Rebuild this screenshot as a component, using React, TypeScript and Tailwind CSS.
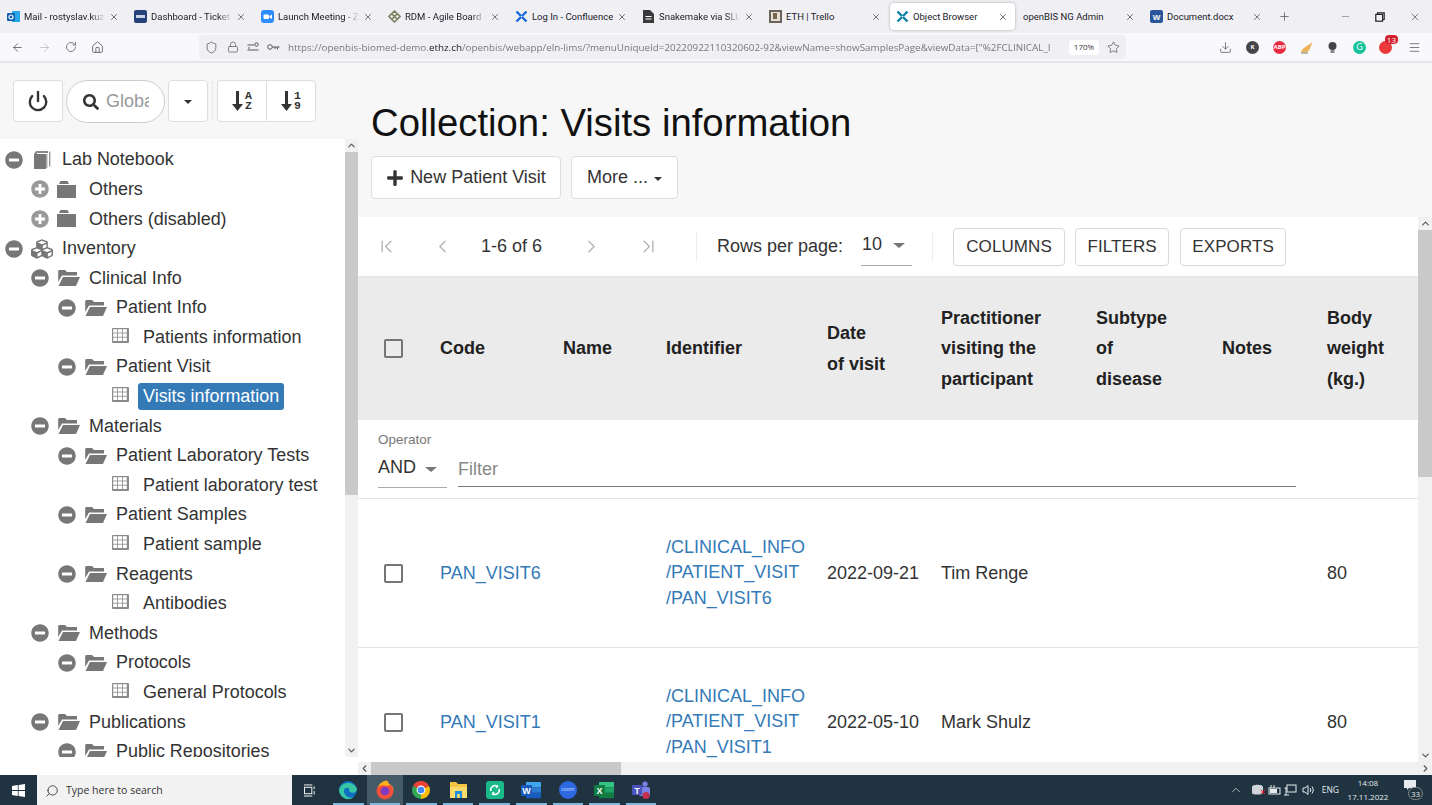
import { ReactNode } from "react";
import { FaCubes, FaMinusCircle, FaPlus, FaPlusCircle, FaSearch } from "react-icons/fa";
import {
  ArrowLeft,
  ArrowRight,
  ChevronDown,
  ChevronFirst,
  ChevronLast,
  ChevronLeft,
  ChevronRight,
  ChevronUp,
  Download,
  Home,
  Lock,
  Menu,
  Minus,
  Plus,
  Power,
  RotateCw,
  Search,
  Shield,
  Star,
  X,
} from "lucide-react";

type Tab = { title: string; icon: ReactNode; active?: boolean; fade?: boolean };

function IconBox({ color, label }: { color: string; label: string }) {
  return (
    <svg width="13" height="13" viewBox="0 0 13 13" className="shrink-0">
      <rect width="13" height="13" rx="2" fill={color} />
      <text x="6.5" y="9.5" fontSize="8" fontWeight="700" textAnchor="middle" fill="#fff" fontFamily="Liberation Sans, sans-serif">
        {label}
      </text>
    </svg>
  );
}

function CrossLogo({ color = "#0f7fa8" }: { color?: string }) {
  return (
    <svg width="13" height="13" viewBox="0 0 13 13" className="shrink-0" fill="none" stroke={color} strokeWidth="2.4">
      <path d="M1.5 1.5 L6 6 M11.5 1.5 L7 6 M1.5 11.5 L6 7 M11.5 11.5 L7 7" />
    </svg>
  );
}

const tabs: Tab[] = [
  {
    title: "Mail - rostyslav.kuzya",
    fade: true,
    icon: (
      <svg width="13" height="13" viewBox="0 0 13 13" className="shrink-0">
        <rect x="5" y="1" width="8" height="11" fill="#28a8ea" />
        <rect x="0" y="3" width="8" height="8" rx="1" fill="#0f5fb0" />
        <circle cx="4" cy="7" r="2" fill="none" stroke="#fff" strokeWidth="1.2" />
      </svg>
    ),
  },
  {
    title: "Dashboard - Ticket-Sys",
    fade: true,
    icon: (
      <svg width="13" height="13" viewBox="0 0 13 13" className="shrink-0">
        <rect width="13" height="13" rx="2" fill="#24417c" />
        <rect x="2" y="5" width="9" height="3" fill="#c9d3e6" />
      </svg>
    ),
  },
  {
    title: "Launch Meeting - Zoom",
    fade: true,
    icon: (
      <svg width="13" height="13" viewBox="0 0 13 13" className="shrink-0">
        <rect width="13" height="13" rx="3" fill="#2d8cff" />
        <rect x="2.5" y="4.5" width="5.5" height="4.5" rx="1" fill="#fff" />
        <path d="M8.5 6 L11 4.5 V9 L8.5 7.5 Z" fill="#fff" />
      </svg>
    ),
  },
  {
    title: "RDM - Agile Board - Ji",
    fade: true,
    icon: (
      <svg width="13" height="13" viewBox="0 0 13 13" className="shrink-0" fill="none" stroke="#7d7f5e" strokeWidth="1.6">
        <path d="M6.5 1 L12 6.5 L6.5 12 L1 6.5 Z M4 4 L9 9 M9 4 L4 9" />
      </svg>
    ),
  },
  { title: "Log In - Confluence", icon: <CrossLogo color="#1868db" /> },
  {
    title: "Snakemake via SLURM",
    fade: true,
    icon: (
      <svg width="11" height="13" viewBox="0 0 11 13" className="shrink-0">
        <path d="M0 0 H7 L11 4 V13 H0 Z" fill="#3a3a3a" />
        <path d="M2.5 6.5 H8.5 M2.5 9 H8.5" stroke="#fff" strokeWidth="1" />
      </svg>
    ),
  },
  {
    title: "ETH | Trello",
    icon: (
      <svg width="13" height="13" viewBox="0 0 13 13" className="shrink-0">
        <rect width="13" height="13" fill="#6b6259" />
        <rect x="2" y="2" width="9" height="9" fill="#e4dfd5" />
        <rect x="4" y="3" width="4" height="6" fill="#75654d" />
      </svg>
    ),
  },
  { title: "Object Browser", icon: <CrossLogo />, active: true },
  { title: "openBIS NG Admin", icon: null },
  { title: "Document.docx", icon: <IconBox color="#2b579a" label="W" /> },
];

function BrowserTab({ tab }: { tab: Tab }) {
  return (
    <div className={`flex h-[27px] shrink-0 items-center rounded ${tab.active ? "mx-px w-[125px] bg-white pl-[6px] pr-[7px] shadow-[0_0_3px_rgba(0,0,0,0.3)]" : "w-[127px] pl-[7px] pr-[8px]"}`}>
      {tab.icon ? <span className="mr-[4px] flex w-[13px] shrink-0 justify-center">{tab.icon}</span> : null}
      <span className={`min-w-0 flex-1 overflow-hidden whitespace-nowrap pt-px font-['Roboto',sans-serif] text-[9.5px] text-[#20202a] ${tab.fade ? "[mask-image:linear-gradient(to_left,transparent,black_14px)]" : ""}`}>{tab.title}</span>
      <X size={10} strokeWidth={1.6} className="ml-1 shrink-0 text-[#33333a]" />
    </div>
  );
}

function ExtIcon({ bg, children, color = "#fff" }: { bg: string; children: ReactNode; color?: string }) {
  return (
    <span className="flex h-[13px] w-[13px] items-center justify-center rounded-full text-[6px] font-bold" style={{ backgroundColor: bg, color }}>
      {children}
    </span>
  );
}

function BrowserChrome() {
  return (
    <header className="shrink-0 font-['Open_Sans',sans-serif]">
      <div className="flex h-[33px] items-center bg-[#f0f0f4] pl-0">
        {tabs.map((tab) => (
          <BrowserTab key={tab.title} tab={tab} />
        ))}
        <Plus size={13} strokeWidth={1.4} className="ml-[8px] text-[#55555c]" />
        <div className="ml-auto flex items-center gap-[24px] pr-[11px] text-[#33333a]">
          <Minus size={11} strokeWidth={1.4} className="text-[#777]" />
          <svg width="10" height="10" viewBox="0 0 10 10" fill="none" stroke="#222" strokeWidth="1.2">
            <rect x="0.8" y="2.4" width="6.8" height="6.8" />
            <path d="M2.5 2.2 V0.8 H9.2 V7.5 H7.8" />
          </svg>
          <X size={12} strokeWidth={1.2} />
        </div>
      </div>
      <div className="flex h-[30px] items-center border-b-[2px] border-[#e6e6e8] bg-[#f9f9fb] text-[#55555c]">
        <div className="flex w-[199px] items-center">
          <ArrowLeft size={13} strokeWidth={1.5} className="ml-[11px]" />
          <ArrowRight size={13} strokeWidth={1.5} className="ml-[14px] text-[#b8b8bc]" />
          <RotateCw size={12} strokeWidth={1.5} className="ml-[14px]" />
          <Home size={13} strokeWidth={1.5} className="ml-[14px]" />
        </div>
        <div className="flex h-[24px] w-[927px] items-center rounded bg-[#f0f0f4]">
          <Shield size={13} strokeWidth={1.4} className="ml-[6px]" />
          <Lock size={12} strokeWidth={1.4} className="ml-[9px]" />
          <svg width="12" height="10" viewBox="0 0 12 10" fill="none" stroke="#55555c" className="ml-[8px]">
            <path d="M0.5 3 H7 M0.5 8 H11.5 M1 6 H3" />
            <circle cx="9.5" cy="2.5" r="1.7" />
          </svg>
          <svg width="13" height="8" viewBox="0 0 13 8" fill="none" stroke="#55555c" className="ml-[8px]">
            <circle cx="3" cy="4" r="2.3" />
            <path d="M5.5 4 H12.5 M10.5 4 V6.5 M8 4 V6" />
          </svg>
          <span className="ml-[8px] w-[775px] overflow-hidden whitespace-nowrap text-[9.85px] text-[#77777c] [mask-image:linear-gradient(to_left,transparent,black_10px)]">
            https://openbis-biomed-demo.<span className="text-[#1b1b20]">ethz.ch</span>/openbis/webapp/eln-lims/?menuUniqueId=20220922110320602-92&amp;viewName=showSamplesPage&amp;viewData=["%2FCLINICAL_I
          </span>
          <span className="ml-[6px] flex h-[15px] w-[30px] items-center justify-center rounded-sm bg-white text-[8px] text-[#33333a]">170%</span>
          <Star size={13} strokeWidth={1.4} className="ml-[8px]" />
        </div>
        <div className="relative flex flex-1 items-center">
          <Download size={13} strokeWidth={1.4} className="ml-[93px]" />
          <span className="ml-[14px]"><ExtIcon bg="#45454b">K</ExtIcon></span>
          <span className="ml-[14px]"><ExtIcon bg="#e8293f">ABP</ExtIcon></span>
          <span className="ml-[14px]">
            <svg width="13" height="13" viewBox="0 0 13 13">
              <path d="M1 11 C3 6 7 6 12 1 C11 7 9 11 5 12 Z" fill="#eab35a" />
              <path d="M1 12 H8" stroke="#b7b7a4" strokeWidth="2" />
            </svg>
          </span>
          <span className="ml-[13px]">
            <svg width="13" height="13" viewBox="0 0 13 13">
              <circle cx="6.5" cy="5" r="4" fill="#45454b" />
              <rect x="4.5" y="9" width="4" height="3" fill="#8a8a8e" />
            </svg>
          </span>
          <span className="ml-[14px]"><ExtIcon bg="#15c39a"><span className="text-[9px] font-normal">G</span></ExtIcon></span>
          <span className="relative ml-[13px]">
            <ExtIcon bg="#ea3a3a">{""}</ExtIcon>
            <span className="absolute -right-[6px] -top-[6px] rounded-sm bg-[#d4202c] px-[2px] text-[8px] leading-[9px] text-white">13</span>
          </span>
          <Menu size={13} strokeWidth={1.4} className="ml-[16px]" />
        </div>
      </div>
    </header>
  );
}

function BookIcon() {
  return (
    <svg width="17" height="18" viewBox="0 0 17 18" className="shrink-0">
      <path d="M0 3 L2 0 H14 V2 H3 V3 Z" fill="#8a8a8a" />
      <rect x="0" y="3" width="12" height="15" fill="#777" />
      <rect x="12" y="3" width="1.5" height="14" fill="#aaa" />
      <rect x="15" y="0.5" width="1.4" height="15" fill="#999" />
    </svg>
  );
}

function ClosedFolderIcon() {
  return (
    <svg width="19" height="17" viewBox="0 0 19 17" fill="#777" className="shrink-0 -translate-x-[2px]">
      <path d="M2 3 L3.5 0 H10.5 L12 3 Z" />
      <rect x="0" y="4" width="19" height="13" />
    </svg>
  );
}

function OpenFolderIcon() {
  return (
    <svg width="23" height="16" viewBox="0 0 23 16" fill="#777" className="shrink-0">
      <path d="M2 0 H8 L10 2 H20 V5.5 H5 L1.2 12 V1 Z" />
      <path d="M6 7 H23 L19 16 H1.5 Z" />
    </svg>
  );
}

function TableIcon() {
  return (
    <svg width="17" height="15" viewBox="0 0 17 15" className="mb-[4px] shrink-0 -translate-x-[2px]">
      <rect width="17" height="15" rx="1" fill="#8a8a8a" />
      {[1.2, 6, 10.8].map((x) => [1.2, 5.4, 9.6].map((y) => <rect key={`${x}-${y}`} x={x} y={y} width="4" height="3.4" fill="#fff" />))}
    </svg>
  );
}

type Node = { level: number; label: string; kind: "book" | "cubes" | "closed" | "open" | "table"; state?: "minus" | "plus"; selected?: boolean };

const nodes: Node[] = [
  { level: 0, label: "Lab Notebook", kind: "book", state: "minus" },
  { level: 1, label: "Others", kind: "closed", state: "plus" },
  { level: 1, label: "Others (disabled)", kind: "closed", state: "plus" },
  { level: 0, label: "Inventory", kind: "cubes", state: "minus" },
  { level: 1, label: "Clinical Info", kind: "open", state: "minus" },
  { level: 2, label: "Patient Info", kind: "open", state: "minus" },
  { level: 3, label: "Patients information", kind: "table" },
  { level: 2, label: "Patient Visit", kind: "open", state: "minus" },
  { level: 3, label: "Visits information", kind: "table", selected: true },
  { level: 1, label: "Materials", kind: "open", state: "minus" },
  { level: 2, label: "Patient Laboratory Tests", kind: "open", state: "minus" },
  { level: 3, label: "Patient laboratory test", kind: "table" },
  { level: 2, label: "Patient Samples", kind: "open", state: "minus" },
  { level: 3, label: "Patient sample", kind: "table" },
  { level: 2, label: "Reagents", kind: "open", state: "minus" },
  { level: 3, label: "Antibodies", kind: "table" },
  { level: 1, label: "Methods", kind: "open", state: "minus" },
  { level: 2, label: "Protocols", kind: "open", state: "minus" },
  { level: 3, label: "General Protocols", kind: "table" },
  { level: 1, label: "Publications", kind: "open", state: "minus" },
  { level: 2, label: "Public Repositories", kind: "open", state: "minus" },
];

const indents = ["pl-[5px]", "pl-[31px]", "pl-[58px]", "pl-[85px]"];

function NodeIcon({ kind }: { kind: Node["kind"] }) {
  if (kind === "book") return <BookIcon />;
  if (kind === "cubes") return <FaCubes size={22} className="text-[#777]" />;
  if (kind === "closed") return <ClosedFolderIcon />;
  if (kind === "open") return <OpenFolderIcon />;
  return <TableIcon />;
}

function TreeRow({ node }: { node: Node }) {
  const labelClass = node.selected ? "ml-0 rounded-[3px] bg-[#337ab7] px-[5px] leading-[27px] text-white" : node.level === 0 ? "ml-[4px]" : "ml-[5px]";
  return (
    <div className={`flex h-[29.6px] shrink-0 items-center whitespace-nowrap text-[17.95px] text-[#333] ${indents[node.level]}`}>
      <span className="flex w-[18px] shrink-0 justify-center">
        {node.state === "minus" ? <FaMinusCircle size={18} className="text-[#777]" /> : null}
        {node.state === "plus" ? <FaPlusCircle size={18} className="text-[#999]" /> : null}
      </span>
      <span className="ml-[3px] flex w-[32px] shrink-0 justify-center">
        <NodeIcon kind={node.kind} />
      </span>
      <span className={labelClass}>{node.label}</span>
    </div>
  );
}

function ToolButton({ children, className = "" }: { children: ReactNode; className?: string }) {
  return <div className={`flex h-[42px] items-center justify-center border border-[#ddd] bg-white ${className}`}>{children}</div>;
}

function SortIcon({ top, bottom }: { top: string; bottom: string }) {
  return (
    <span className="flex items-center">
      <svg width="11" height="20" viewBox="0 0 11 20" fill="#333">
        <rect x="4" y="0" width="3" height="14" />
        <path d="M0 13 H11 L5.5 20 Z" />
      </svg>
      <span className="ml-[2px] flex flex-col font-['Liberation_Mono',monospace] text-[11.5px] font-bold leading-[10.5px] text-[#333]">
        <span>{top}</span>
        <span>{bottom}</span>
      </span>
    </span>
  );
}

function Sidebar() {
  return (
    <aside className="flex w-[358px] shrink-0 flex-col">
      <div className="flex h-[76px] shrink-0 items-start bg-[#f7f7f7] pl-[13px] pt-[17px] text-[#333]">
        <ToolButton className="w-[50px] rounded">
          <Power size={22} strokeWidth={2.6} />
        </ToolButton>
        <div className="ml-[3px] flex h-[43px] w-[99px] items-center rounded-full border border-[#ccc] bg-white pl-[16px]">
          <FaSearch size={16} className="shrink-0" />
          <span className="ml-[7px] w-[43px] overflow-hidden text-[18px] text-[#999]">Global</span>
        </div>
        <ToolButton className="ml-[3px] w-[40px] rounded">
          <span className="mt-px h-0 w-0 border-x-[4px] border-t-[4px] border-x-transparent border-t-[#333]" />
        </ToolButton>
        <span className="ml-[4px] mt-[2px] h-[38px] w-0 border-l border-dotted border-[#ddd]" />
        <ToolButton className="ml-[4px] w-[50px] rounded-l">
          <SortIcon top="A" bottom="Z" />
        </ToolButton>
        <ToolButton className="-ml-px w-[50px] rounded-r">
          <SortIcon top="1" bottom="9" />
        </ToolButton>
      </div>
      <div className="flex min-h-0 flex-1 bg-white">
        <div className="flex h-[618px] min-w-0 flex-1 flex-col overflow-hidden pt-[6px]">
          {nodes.map((node) => (
            <TreeRow key={node.label} node={node} />
          ))}
        </div>
        <div className="flex h-[618px] w-[13px] shrink-0 flex-col items-center justify-between bg-[#f1f1f1]">
          <div className="flex w-full flex-1 flex-col">
            <ChevronUp size={11} strokeWidth={2.4} className="mx-auto my-[1px] text-[#555]" />
            <div className="h-[343px] w-full bg-[#c9c9c9]" />
          </div>
          <ChevronDown size={11} strokeWidth={2.4} className="my-[1px] text-[#555]" />
        </div>
      </div>
    </aside>
  );
}

function OutlineButton({ children, className = "" }: { children: ReactNode; className?: string }) {
  return <div className={`flex h-[38px] items-center justify-center rounded border border-[#d9d9d9] text-[17px] tracking-[0.1px] text-[#333] ${className}`}>{children}</div>;
}

function Pagination() {
  return (
    <div className="flex h-[60px] shrink-0 items-center border-b border-[#e4e4e4] pl-[18px] text-[18px] text-[#333]">
      <ChevronFirst size={21} strokeWidth={1.6} className="text-[#b5b5b5]" />
      <ChevronLeft size={21} strokeWidth={1.6} className="ml-[35px] text-[#b5b5b5]" />
      <span className="ml-[28px] w-[89px]">1-6 of 6</span>
      <ChevronRight size={21} strokeWidth={1.6} className="ml-[11px] text-[#b5b5b5]" />
      <ChevronLast size={21} strokeWidth={1.6} className="ml-[36px] text-[#b5b5b5]" />
      <span className="ml-[37px] h-[31px] w-px bg-[#eee]" />
      <span className="ml-[20px]">Rows per page:</span>
      <div className="ml-[18px] flex h-[38px] w-[51px] items-center border-b border-[#aaa] pb-[4px] pl-px">
        <span>10</span>
        <span className="ml-[11px] mt-[3px] h-0 w-0 border-x-[6px] border-t-[5px] border-x-transparent border-t-[#777]" />
      </div>
      <span className="ml-[20px] h-[31px] w-px bg-[#eee]" />
      <OutlineButton className="ml-[20px] w-[112px]">COLUMNS</OutlineButton>
      <OutlineButton className="ml-[10px] w-[94px]">FILTERS</OutlineButton>
      <OutlineButton className="ml-[11px] w-[106px]">EXPORTS</OutlineButton>
    </div>
  );
}

const gridCols = "grid grid-cols-[82px_123px_103px_161px_114px_155px_126px_105px_91px] items-center";

function CheckBox() {
  return <span className="ml-[26px] block h-[19px] w-[19px] rounded-[2px] border-[2px] border-[#757575]" />;
}

function HeaderCell({ lines }: { lines: string[] }) {
  return (
    <div className="text-[18px] font-bold leading-[30.5px] text-[#222]">
      {lines.map((line) => (
        <div key={line} className="whitespace-nowrap">{line}</div>
      ))}
    </div>
  );
}

function TableHeader() {
  return (
    <div className={`${gridCols} h-[143px] shrink-0 bg-[#ebebeb]`}>
      <CheckBox />
      <HeaderCell lines={["Code"]} />
      <HeaderCell lines={["Name"]} />
      <HeaderCell lines={["Identifier"]} />
      <HeaderCell lines={["Date", "of visit"]} />
      <HeaderCell lines={["Practitioner", "visiting the", "participant"]} />
      <HeaderCell lines={["Subtype", "of", "disease"]} />
      <HeaderCell lines={["Notes"]} />
      <HeaderCell lines={["Body", "weight", "(kg.)"]} />
    </div>
  );
}

function FilterRow() {
  return (
    <div className="flex h-[79px] shrink-0 items-start border-b border-[#e4e4e4] pl-[20px] pt-[12px]">
      <div className="w-[69px]">
        <div className="text-[13.5px] leading-[16px] text-[#777]">Operator</div>
        <div className="mt-[4px] flex h-[36px] items-center border-b border-[#aaa] pb-[4px] text-[18px] text-[#333]">
          <span>AND</span>
          <span className="ml-[9px] mt-[3px] h-0 w-0 border-x-[6px] border-t-[5px] border-x-transparent border-t-[#777]" />
        </div>
      </div>
      <div className="ml-[11px] mt-[19px] flex h-[36px] w-[838px] items-center border-b border-[#777] pt-px text-[18px] text-[#888]">Filter</div>
    </div>
  );
}

function DataRow({ code, date, person }: { code: string; date: string; person: string }) {
  return (
    <div className={`${gridCols} h-[149px] shrink-0 border-b border-[#e4e4e4] text-[18px] text-[#333]`}>
      <CheckBox />
      <span className="text-[#337ab7]">{code}</span>
      <span />
      <div className="leading-[25.5px] text-[#337ab7]">
        <div>/CLINICAL_INFO</div>
        <div>/PATIENT_VISIT</div>
        <div>/{code}</div>
      </div>
      <span>{date}</span>
      <span>{person}</span>
      <span />
      <span />
      <span>80</span>
    </div>
  );
}

function MainPanel() {
  return (
    <main className="flex min-w-0 flex-1 flex-col bg-[#f7f7f7]">
      <div className="h-[154px] shrink-0 pl-[13px] pt-[36px]">
        <h1 className="text-[38.3px] leading-[48px] text-[#111]">Collection: Visits information</h1>
        <div className="mt-[9px] flex gap-[10px]">
          <ToolButton className="h-[43px] w-[190px] rounded text-[18px] text-[#333]">
            <FaPlus size={18} className="mr-[6px]" />
            New Patient Visit
          </ToolButton>
          <ToolButton className="h-[43px] w-[107px] rounded text-[18px] text-[#333]">
            More ...
            <span className="ml-[6px] mt-[2px] h-0 w-0 border-x-[4px] border-t-[4px] border-x-transparent border-t-[#333]" />
          </ToolButton>
        </div>
      </div>
      <div className="flex min-h-0 flex-1 bg-white">
        <div className="min-w-0 flex-1 overflow-hidden">
          <div className="flex h-full w-[1060px] flex-col overflow-hidden">
            <Pagination />
            <TableHeader />
            <FilterRow />
            <DataRow code="PAN_VISIT6" date="2022-09-21" person="Tim Renge" />
            <DataRow code="PAN_VISIT1" date="2022-05-10" person="Mark Shulz" />
          </div>
        </div>
        <div className="flex w-[14px] shrink-0 flex-col items-center bg-[#f1f1f1]">
          <ChevronUp size={11} strokeWidth={2.4} className="my-[1px] text-[#555]" />
          <div className="h-[247px] w-full bg-[#c9c9c9]" />
          <ChevronDown size={11} strokeWidth={2.4} className="mb-[1px] mt-auto text-[#555]" />
        </div>
      </div>
      <div className="flex h-[13px] shrink-0 items-center bg-[#f1f1f1]">
        <ChevronLeft size={11} strokeWidth={2.4} className="ml-[1px] text-[#555]" />
        <div className="ml-[1px] h-full w-[250px] bg-[#c9c9c9]" />
        <ChevronRight size={11} strokeWidth={2.4} className="ml-auto mr-[1px] text-[#555]" />
      </div>
    </main>
  );
}

function TaskIcon({ children, active }: { children: ReactNode; active?: boolean }) {
  return (
    <div className={`relative flex h-[30px] w-[36.6px] shrink-0 items-center justify-center ${active ? "bg-[#455c68]" : ""}`}>
      {children}
      <span className="absolute inset-x-[3px] bottom-0 h-[2px] bg-[#7fb8dc]" />
    </div>
  );
}

function OfficeIcon({ light, mid, dark, label }: { light: string; mid: string; dark: string; label: string }) {
  return (
    <svg width="20" height="18" viewBox="0 0 20 18">
      <rect x="5" y="1" width="15" height="5.4" fill={light} />
      <rect x="5" y="6.4" width="15" height="5.4" fill={mid} />
      <rect x="5" y="11.8" width="15" height="5.4" fill={dark} />
      <rect x="0" y="4" width="11" height="11" rx="1" fill={dark} />
      <text x="5.5" y="13" fontSize="9" fontWeight="700" textAnchor="middle" fill="#fff" fontFamily="Liberation Sans, sans-serif">
        {label}
      </text>
    </svg>
  );
}

function Taskbar() {
  return (
    <footer className="flex h-[30px] shrink-0 items-center bg-[#1f3440] font-['Open_Sans',sans-serif] text-[#e6ebef]">
      <div className="flex w-[37px] shrink-0 justify-center">
        <svg width="13" height="13" viewBox="0 0 13 13" fill="#fff">
          <path d="M0 2 L5.8 1.1 V6 H0 Z M6.6 1 L13 0 V6 H6.6 Z M0 7 H5.8 V11.9 L0 11 Z M6.6 7 H13 V13 L6.6 12 Z" />
        </svg>
      </div>
      <div className="flex h-full w-[255px] shrink-0 items-center bg-[#f2f2f2] pl-[8px] pt-[2px] text-[10.5px] text-[#333]">
        <Search size={14} strokeWidth={1.5} className="-scale-x-100" />
        <span className="ml-[7px]">Type here to search</span>
      </div>
      <div className="ml-[12px] flex w-[12px] justify-center">
        <svg width="13" height="13" viewBox="0 0 13 13" fill="none" stroke="#fff" strokeWidth="1">
          <rect x="0.5" y="3" width="8" height="7" />
          <path d="M0 0.5 H9 M0 12.5 H9 M11 2 V5 M11 7 V11" />
        </svg>
      </div>
      <div className="ml-[14px] flex">
        <TaskIcon>
          <svg width="20" height="20" viewBox="0 0 20 20">
            <circle cx="10" cy="10" r="9" fill="#0f6fc0" />
            <path d="M1 10 C3 2 15 0 19 9 C19 13 13 14 11 11 C13 7 5 6 6 12 C7 17 13 19 16 17 C10 22 2 18 1 10 Z" fill="#38c6a4" />
          </svg>
        </TaskIcon>
        <TaskIcon active>
          <svg width="20" height="20" viewBox="0 0 20 20">
            <circle cx="10" cy="11" r="8.5" fill="#f0503c" />
            <path d="M3 7 C6 1 11 0 13 1 C12 3 17 5 18.5 10 C18 4 14 5 12 6 C9 5 6 5 3 7 Z" fill="#ffb01f" />
            <circle cx="10" cy="11" r="4.3" fill="#7b3bc4" />
          </svg>
        </TaskIcon>
        <TaskIcon>
          <svg width="20" height="20" viewBox="0 0 20 20">
            <path d="M10 10 L2 6 A9 9 0 0 1 18 6 Z" fill="#ea4335" />
            <path d="M10 10 L18 6 A9 9 0 0 1 10 19 Z" fill="#fbbc05" />
            <path d="M10 10 L10 19 A9 9 0 0 1 2 6 Z" fill="#34a853" />
            <circle cx="10" cy="10" r="4.4" fill="#fff" />
            <circle cx="10" cy="10" r="3.3" fill="#4285f4" />
          </svg>
        </TaskIcon>
        <TaskIcon>
          <svg width="17" height="16" viewBox="0 0 17 16">
            <path d="M0 0 H6 L8 2 H17 V16 H0 Z" fill="#f4c542" />
            <rect x="0" y="5" width="17" height="11" fill="#fadb6c" />
            <rect x="5" y="9" width="7" height="7" fill="#1d8fe1" />
            <rect x="7.2" y="12" width="2.6" height="4" fill="#fadb6c" />
          </svg>
        </TaskIcon>
        <TaskIcon>
          <svg width="18" height="18" viewBox="0 0 18 18">
            <rect width="18" height="18" rx="3" fill="#19b98a" />
            <path d="M5 10 C3.5 6.5 8 3.5 11 5 M13 8 C14.5 11.5 10 14.5 7 13 M10 7 L12 4.5 M8 11 L6 13.5" stroke="#fff" strokeWidth="1.5" fill="none" />
          </svg>
        </TaskIcon>
        <TaskIcon><OfficeIcon light="#41a5ee" mid="#2b7cd3" dark="#185abd" label="W" /></TaskIcon>
        <TaskIcon>
          <span className="flex h-[18px] w-[18px] items-center justify-center rounded-full bg-[#2d68e0] text-[5px] text-[#cfe0ff]">zoom</span>
        </TaskIcon>
        <TaskIcon><OfficeIcon light="#33c481" mid="#21a366" dark="#107c41" label="X" /></TaskIcon>
        <TaskIcon>
          <svg width="20" height="20" viewBox="0 0 20 20">
            <circle cx="14" cy="4" r="2.6" fill="#7b83eb" />
            <rect x="8" y="7" width="11" height="9" rx="2" fill="#7b83eb" />
            <rect x="1" y="5" width="10" height="10" rx="1" fill="#4b53bc" />
            <text x="6" y="13.5" fontSize="8.5" fontWeight="700" textAnchor="middle" fill="#fff" fontFamily="Liberation Sans, sans-serif">T</text>
            <circle cx="15" cy="15.5" r="3.5" fill="#c4314b" />
          </svg>
        </TaskIcon>
      </div>
      <div className="ml-auto flex items-center">
        <ChevronUp size={14} strokeWidth={1.2} />
        <span className="relative ml-[8px] flex">
          <svg width="14" height="12" viewBox="0 0 14 12">
            <path d="M1 3 C1 0 12 0 12 3 V9 C12 11 1 11 1 9 Z" fill="#cfd4d8" />
          </svg>
          <X size={8} strokeWidth={3} className="absolute -right-[2px] bottom-0 text-[#e8112d]" />
        </span>
        <svg width="13" height="12" viewBox="0 0 13 12" fill="none" stroke="#e6ebef" className="ml-[3px]">
          <rect x="1" y="4" width="11" height="6" />
          <path d="M3 1 V4 M6 1 V4" />
          <rect x="2.5" y="5.5" width="6" height="3" fill="#e6ebef" />
        </svg>
        <svg width="13" height="12" viewBox="0 0 13 12" fill="none" stroke="#e6ebef" className="ml-[3px]">
          <rect x="3" y="1" width="9" height="7" />
          <path d="M0.5 4 H3 M2 4 V11 M0 11 H5" />
        </svg>
        <svg width="12" height="12" viewBox="0 0 12 12" fill="none" stroke="#e6ebef" className="ml-[5px]">
          <path d="M1 4 H3 L6 1.5 V10.5 L3 8 H1 Z M8 4 C9 5 9 7 8 8 M10 2.5 C11.6 4.5 11.6 7.5 10 9.5" />
        </svg>
        <span className="ml-[8px] text-[8.5px]">ENG</span>
        <div className="ml-[8px] w-[42px] text-center text-[8px] leading-[14px]">
          <div>14:08</div>
          <div>17.11.2022</div>
        </div>
        <div className="relative ml-[15px] mr-[13px] h-[20px] w-[15px]">
          <svg width="12" height="11" viewBox="0 0 12 11" fill="#e6ebef">
            <path d="M0 0 H12 V8 H5 L3 10 V8 H0 Z" />
          </svg>
          <span className="absolute -right-[4px] top-[7px] flex h-[13px] w-[15px] items-center justify-center rounded-full border border-[#888] bg-[#1f3440] text-[8px]">33</span>
        </div>
      </div>
    </footer>
  );
}

export default function App() {
  return (
    <div className="flex h-[805px] w-[1432px] flex-col overflow-hidden font-['Liberation_Sans',Arial,sans-serif]">
      <BrowserChrome />
      <div className="flex min-h-0 flex-1">
        <Sidebar />
        <MainPanel />
      </div>
      <Taskbar />
    </div>
  );
}
